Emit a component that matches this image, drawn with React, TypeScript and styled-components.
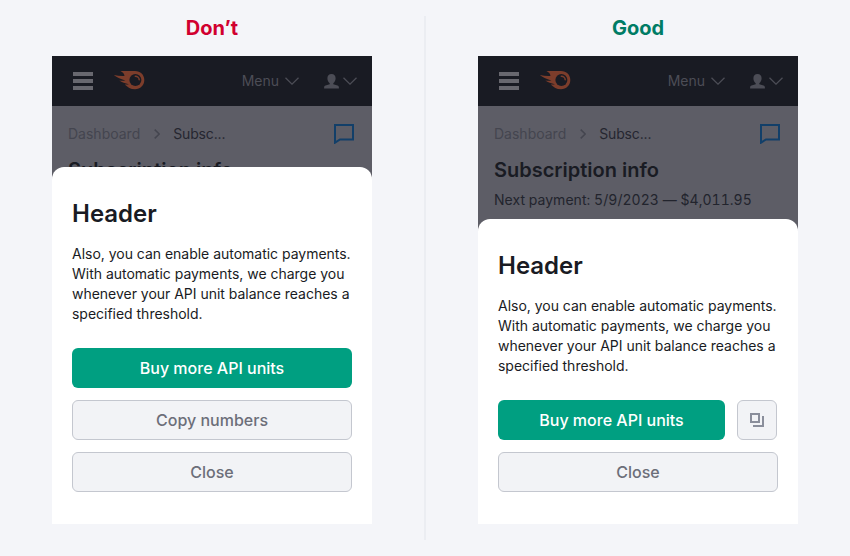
import React from "react";
import styled, { createGlobalStyle } from "styled-components";

const GlobalStyle = createGlobalStyle`
  * { box-sizing: border-box; }
  body { margin: 0; background: #f4f5f9; font-family: Inter, sans-serif; color: #191b23; }
  h2, h3, p { margin: 0; }
  button { font: inherit; }
  svg { display: block; flex: none; }
`;

const Page = styled.main`
  width: 850px;
  height: 556px;
  display: grid;
  grid-template-columns: 424px 2px 424px;
`;

const Divider = styled.div`
  margin: 16px 0;
  background: #ebedf2;
`;

const Example = styled.section`
  display: flex;
  flex-direction: column;
  width: 320px;
  margin-left: 52px;
`;

const Verdict = styled.h2<{ $color: string }>`
  height: 56px;
  text-align: center;
  font-size: 20px;
  font-weight: 700;
  line-height: 56px;
  color: ${(p) => p.$color};
`;

const Phone = styled.div`
  display: grid;
  height: 468px;
  background: #5d5d66;
  overflow: hidden;
  & > * { grid-area: 1 / 1; }
`;

const Screen = styled.div`
  display: flex;
  flex-direction: column;
`;

const TopBar = styled.header`
  display: flex;
  align-items: center;
  height: 50px;
  padding: 0 15px 0 21px;
  background: #191b23;
  color: #4c4d56;
`;

const Logo = styled.svg`
  margin-left: 20px;
`;

const MenuLabel = styled.span`
  margin-left: auto;
  margin-right: 6px;
  font-size: 14px;
  line-height: 20px;
`;

const UserIcon = styled.svg`
  margin-left: 25px;
  margin-right: 4px;
`;

const Content = styled.div`
  padding: 18px 16px;
`;

const Crumbs = styled.nav`
  display: flex;
  align-items: center;
  height: 20px;
  font-size: 14px;
  line-height: 20px;
`;

const Crumb = styled.span<{ $current?: boolean }>`
  letter-spacing: ${(p) => (p.$current ? "-0.15px" : "0")};
  color: ${(p) => (p.$current ? "#252630" : "#44454f")};
`;

const CrumbArrow = styled.svg`
  margin: 0 13px 0 14px;
`;

const ChatIcon = styled.svg`
  margin-left: auto;
  margin-right: 2px;
`;

const ScreenTitle = styled.h3`
  margin-top: 14px;
  font-size: 20px;
  line-height: 24px;
  font-weight: 600;
`;

const Payment = styled.p`
  margin-top: 8px;
  font-size: 14px;
  line-height: 20px;
  letter-spacing: 0.03px;
  font-variant-numeric: tabular-nums;
  color: #22242d;
  white-space: nowrap;
`;

const Sheet = styled.div`
  z-index: 1;
  align-self: end;
  padding: 32px 20px;
  border-radius: 12px 12px 0 0;
  background: #fff;
`;

const SheetTitle = styled.h3`
  font-size: 24px;
  line-height: 29px;
  font-weight: 600;
`;

const SheetText = styled.p`
  margin-top: 16px;
  font-size: 14px;
  line-height: 20px;
  letter-spacing: -0.02px;
  white-space: nowrap;
`;

const Actions = styled.div`
  display: flex;
  flex-direction: column;
  gap: 12px;
  margin-top: 24px;
`;

const ActionRow = styled.div`
  display: flex;
  gap: 12px;
  padding-right: 1px;
`;

const Button = styled.button<{ $primary?: boolean; $icon?: boolean }>`
  display: flex;
  align-items: center;
  justify-content: center;
  flex: ${(p) => (p.$icon ? "none" : "1 0 auto")};
  width: ${(p) => (p.$icon ? "40px" : "auto")};
  height: 40px;
  padding: 0;
  border: ${(p) => (p.$primary ? "0" : "1px solid #c4c7cf")};
  border-radius: 6px;
  background: ${(p) => (p.$primary ? "#009f81" : "#f2f3f6")};
  color: ${(p) => (p.$primary ? "#fff" : "#6c6e79")};
  font-size: 16px;
  font-weight: 500;
  line-height: 24px;
`;

const Chevron = () => (
  <svg width="14" height="8" viewBox="0 0 14 8" fill="none" stroke="currentColor" strokeWidth="1.3">
    <path d="M.5 .7 7 7.1 13.5 .7" />
  </svg>
);

const PhoneScreen = ({ payment }: { payment?: string }) => (
  <Screen>
    <TopBar>
      <svg width="20" height="18" viewBox="0 0 20 18" fill="#68686f">
        <path d="M0 0h20v4H0zM0 7h20v4H0zM0 14h20v4H0z" />
      </svg>
      <Logo width="32" height="20" viewBox="0 0 32 20">
        <path fill="#7c3d2b" d="M7.400 0H22C27.500 0 31.300 3.800 31.300 9s-4 9.200-9.300 9.200c-4.400 0-7.500-2.200-10.300-4.800 1.700.1 3.300.1 4.200-.2-3.700-.6-7.100-1.800-9.600-3.600 2.700.4 4.700.3 6-.1C7.400 8.200 3.300 6.300.8 4.100c3.800.7 7.300 1 10.700.8C11.400 2.900 9.700 1.100 7.400 0Z" />
        <circle cx="22.400" cy="9" r="6" fill="#191b23" />
        <path fill="none" stroke="#7c3d2b" strokeWidth="1.500" strokeLinecap="round" d="M22.300 5.200c2.100 0 3.900 1.600 3.900 3.500" />
      </Logo>
      <MenuLabel>Menu</MenuLabel>
      <Chevron />
      <UserIcon width="15" height="15" viewBox="0 0 15 15" fill="currentColor">
        <path d="M7.500 0C10.200 0 11.600 1.600 11.600 4.300c0 2-.8 3.800-2.300 4.900v1l4.200 1.300c.9.300 1.400 1 1.400 2v1H.1v-1c0-1 .5-1.700 1.400-2l4.200-1.300v-1C4.200 8.100 3.400 6.300 3.400 4.300 3.400 1.600 4.800 0 7.500 0Z" />
      </UserIcon>
      <Chevron />
    </TopBar>
    <Content>
      <Crumbs>
        <Crumb>Dashboard</Crumb>
        <CrumbArrow width="6" height="10" viewBox="0 0 6 10" fill="none" stroke="#44454f" strokeWidth="1.500">
          <path d="m.7.600 4.500 4.400L.7 9.400" />
        </CrumbArrow>
        <Crumb $current>Subsc...</Crumb>
        <ChatIcon width="20" height="20" viewBox="0 0 20 20" fill="none" stroke="#123f69" strokeWidth="2">
          <path d="M1 1h18v14.500H6L1 18.700Z" />
        </ChatIcon>
      </Crumbs>
      <ScreenTitle>Subscription info</ScreenTitle>
      {payment && <Payment>{payment}</Payment>}
    </Content>
  </Screen>
);

const SheetCopy = () => (
  <>
    <SheetTitle>Header</SheetTitle>
    <SheetText>
      Also, you can enable automatic payments.<br />
      With automatic payments, we charge you<br />
      whenever your API unit balance reaches a<br />
      specified threshold.
    </SheetText>
  </>
);

export default function App() {
  return (
    <>
      <GlobalStyle />
      <Page>
        <Example>
          <Verdict $color="#d1002f">Don’t</Verdict>
          <Phone>
            <PhoneScreen />
            <Sheet>
              <SheetCopy />
              <Actions>
                <Button $primary>Buy more API units</Button>
                <Button>Copy numbers</Button>
                <Button>Close</Button>
              </Actions>
            </Sheet>
          </Phone>
        </Example>
        <Divider />
        <Example>
          <Verdict $color="#007c65">Good</Verdict>
          <Phone>
            <PhoneScreen payment="Next payment: 5/9/2023 — $4,011.95" />
            <Sheet>
              <SheetCopy />
              <Actions>
                <ActionRow>
                  <Button $primary>Buy more API units</Button>
                  <Button $icon aria-label="Copy numbers">
                    <svg width="14" height="14" viewBox="0 0 14 14" fill="none" stroke="#8a8e9b" strokeWidth="2">
                      <path d="M1 1h8v8H1zM13 3v10H3" />
                    </svg>
                  </Button>
                </ActionRow>
                <Button>Close</Button>
              </Actions>
            </Sheet>
          </Phone>
        </Example>
      </Page>
    </>
  );
}
